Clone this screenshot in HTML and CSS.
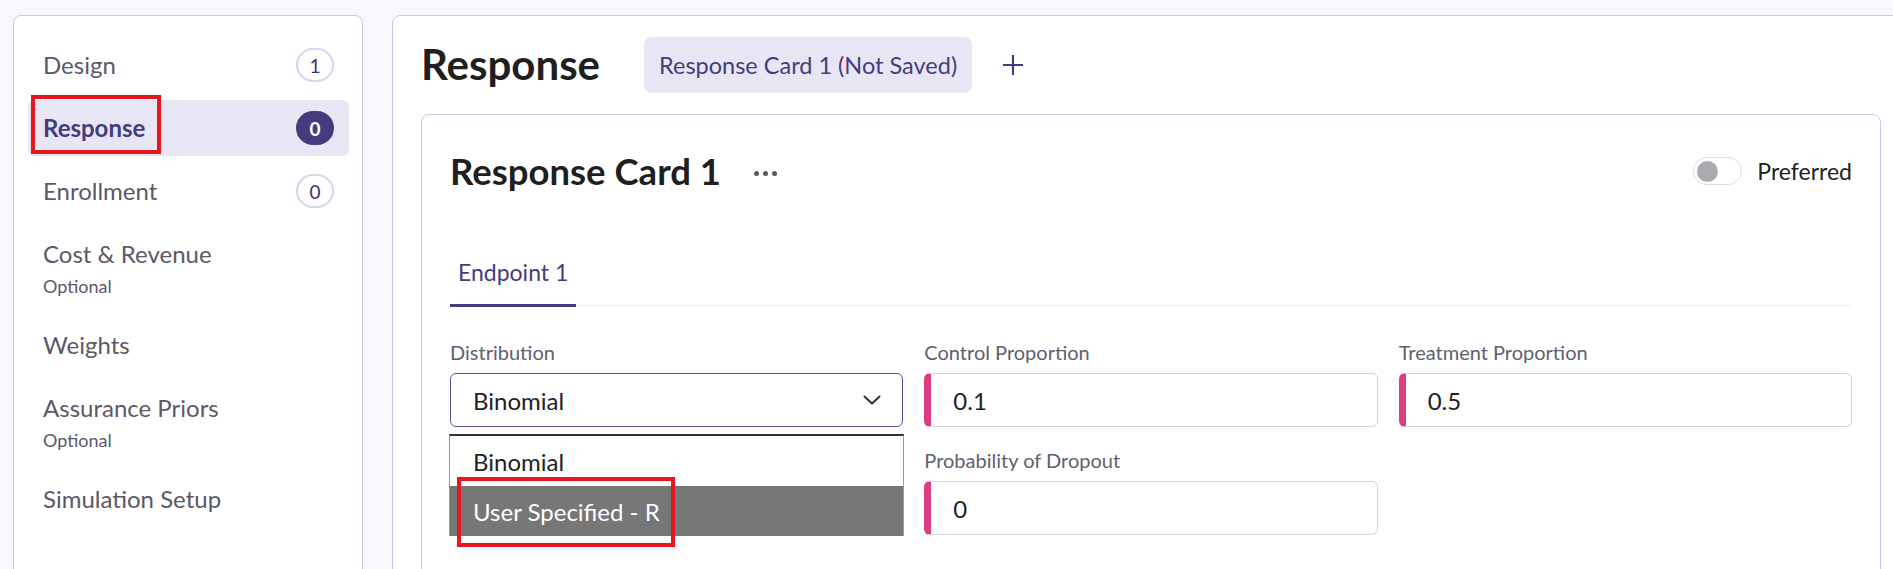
FILE: index.html
```html
<!DOCTYPE html>
<html lang="en">
<head>
<meta charset="utf-8">
<title>Response</title>
<link rel="stylesheet" href="styles.css">
</head>
<body>
<div class="page">
  <aside class="sidebar">
    <div class="nav-item">
      <span class="nav-title">Design</span>
      <span class="badge">1</span>
    </div>
    <div class="nav-item active">
      <span class="nav-title">Response</span>
      <span class="badge filled">0</span>
      <span class="annot annot-nav"></span>
    </div>
    <div class="nav-item">
      <span class="nav-title">Enrollment</span>
      <span class="badge">0</span>
    </div>
    <div class="nav-item">
      <span class="nav-text">
        <span class="nav-title">Cost &amp; Revenue</span>
        <span class="optional">Optional</span>
      </span>
    </div>
    <div class="nav-item">
      <span class="nav-title">Weights</span>
    </div>
    <div class="nav-item">
      <span class="nav-text">
        <span class="nav-title">Assurance Priors</span>
        <span class="optional">Optional</span>
      </span>
    </div>
    <div class="nav-item">
      <span class="nav-title">Simulation Setup</span>
    </div>
  </aside>

  <main class="main">
    <header class="main-head">
      <h1 class="page-title">Response</h1>
      <div class="chip">Response Card 1 (Not Saved)</div>
      <button class="add-btn" aria-label="Add">
        <svg width="22" height="22" viewBox="0 0 22 22"><path d="M11 1v20M1 11h20" stroke="#463c7d" stroke-width="2.2" fill="none"/></svg>
      </button>
    </header>

    <section class="card">
      <div class="card-head">
        <div class="card-title-wrap">
          <h2 class="card-title">Response Card 1</h2>
          <span class="dots"><i></i><i></i><i></i></span>
        </div>
        <div class="pref">
          <span class="toggle"><span class="knob"></span></span>
          <span class="pref-label">Preferred</span>
        </div>
      </div>

      <div class="tabs">
        <div class="tab active">Endpoint 1</div>
      </div>

      <div class="form-grid">
        <div class="field">
          <div class="label">Distribution</div>
          <div class="select-wrap">
            <div class="select">
              <span>Binomial</span>
              <svg width="18" height="10" viewBox="0 0 18 10"><path d="M1.5 1.5l7.5 7 7.5-7" stroke="#333" stroke-width="2" fill="none" stroke-linecap="round" stroke-linejoin="round"/></svg>
            </div>
            <div class="dropdown">
              <div class="option">Binomial</div>
              <div class="option selected">User Specified - R</div>
              <span class="annot annot-opt"></span>
            </div>
          </div>
        </div>
        <div class="field">
          <div class="label">Control Proportion</div>
          <div class="input">0.1</div>
        </div>
        <div class="field">
          <div class="label">Treatment Proportion</div>
          <div class="input">0.5</div>
        </div>
        <div class="field col2">
          <div class="label">Probability of Dropout</div>
          <div class="input">0</div>
        </div>
      </div>
    </section>
  </main>
</div>
</body>
</html>
```

FILE: styles.css
```css
* { box-sizing: border-box; }

html, body {
  margin: 0;
  height: 100%;
}

body {
  background: #f8f8fc;
  font-family: "Lato", "Noto Sans", sans-serif;
  color: #222;
  overflow: hidden;
}

.page {
  display: grid;
  grid-template-columns: 350px 1518px;
  column-gap: 29px;
  padding: 15px 0 0 13px;
  width: max-content;
  align-items: start;
}

/* Sidebar */
.sidebar {
  background: #fff;
  border: 1px solid #cbc6e6;
  border-radius: 8px;
  padding: 21px 13px 21px 14px;
  min-height: 700px;
  display: flex;
  flex-direction: column;
  gap: 7px;
}

.nav-item {
  position: relative;
  display: flex;
  align-items: center;
  justify-content: space-between;
  padding: 12px 15px;
  border-radius: 6px;
  color: #5c5868;
  font-size: 24px;
}

.nav-title {
  line-height: 32px;
  display: block;
}

.nav-text {
  display: flex;
  flex-direction: column;
}

.optional {
  font-size: 18px;
  line-height: 24px;
  margin-top: 4px;
}

.nav-item.active {
  background: #e8e6f4;
  color: #463c7d;
}

.nav-item.active .nav-title {
  font-weight: 700;
}

.badge {
  width: 38px;
  height: 34px;
  margin: -1px 0;
  border: 2px solid #d9d5ee;
  border-radius: 17px;
  display: flex;
  align-items: center;
  justify-content: center;
  font-size: 19px;
  color: #3d3470;
}

.badge.filled {
  background: #463c7d;
  border-color: #463c7d;
  color: #fff;
  font-weight: 700;
}

.annot {
  position: absolute;
  border: 4px solid #e8161f;
  pointer-events: none;
}

.annot-nav {
  left: 3px;
  top: -5px;
  width: 130px;
  height: 59px;
}

/* Main */
.main {
  background: #fff;
  border: 1px solid #cbc6e6;
  border-radius: 8px;
  padding: 21px 28px;
  min-height: 700px;
}

.main-head {
  display: flex;
  align-items: center;
  height: 56px;
}

.page-title {
  margin: -2px 44px 0 0;
  font-size: 42px;
  font-weight: 700;
  line-height: 56px;
  color: #1f1f1f;
}

.chip {
  height: 56px;
  padding: 0 15px;
  background: #e8e6f4;
  border-radius: 8px;
  display: flex;
  align-items: center;
  font-size: 23.5px;
  color: #463c7d;
}

.add-btn {
  margin-left: 30px;
  border: 0;
  background: none;
  padding: 0;
  width: 22px;
  height: 22px;
  display: flex;
}

.card {
  margin-top: 21px;
  border: 1px solid #cbc6e6;
  border-radius: 8px;
  padding: 34px 28px 0;
  min-height: 600px;
}

.card-head {
  display: flex;
  align-items: center;
  justify-content: space-between;
  height: 44px;
}

.card-title-wrap {
  display: flex;
  align-items: center;
  gap: 33px;
}

.card-title {
  margin: 0;
  font-size: 36.5px;
  font-weight: 700;
  line-height: 44px;
  color: #1f1f1f;
}

.dots {
  display: flex;
  gap: 4px;
  margin-top: 4px;
}

.dots i {
  width: 5px;
  height: 5px;
  border-radius: 50%;
  background: #5a5a5a;
}

.pref {
  display: flex;
  align-items: center;
  gap: 15px;
}

.toggle {
  width: 49px;
  height: 28px;
  border: 1px solid #dcdcdc;
  border-radius: 14px;
  display: flex;
  align-items: center;
  padding-left: 3px;
}

.knob {
  width: 21px;
  height: 21px;
  border-radius: 50%;
  background: #aba9b0;
}

.pref-label {
  font-size: 23px;
  color: #222;
}

/* Tabs */
.tabs {
  margin-top: 63px;
  border-bottom: 1px solid #ececf0;
  display: flex;
}

.tab {
  padding: 0 8px 16px;
  font-size: 23px;
  line-height: 32px;
  color: #463c7d;
  border-bottom: 3px solid #463c7d;
  margin-bottom: -2px;
}

/* Form */
.form-grid {
  margin-top: 32px;
  display: grid;
  grid-template-columns: repeat(3, 1fr);
  column-gap: 21px;
  row-gap: 19px;
}

.col2 { grid-column: 2; }

.label {
  font-size: 20px;
  line-height: 28px;
  color: #616070;
  margin-bottom: 7px;
}

.select-wrap {
  position: relative;
}

.select {
  height: 54px;
  border: 1px solid #5d5398;
  border-radius: 6px;
  padding: 0 21px 0 22px;
  display: flex;
  align-items: center;
  justify-content: space-between;
  font-size: 24px;
  color: #222;
}

.dropdown {
  position: absolute;
  left: -1px;
  right: -1px;
  top: 61px;
  background: #fff;
  border: 1px solid #9a9a9a;
  border-top: 2px solid #333;
  border-bottom: 0;
  z-index: 2;
}

.option {
  height: 50px;
  padding-left: 23px;
  display: flex;
  align-items: center;
  font-size: 24px;
  color: #222;
}

.option.selected {
  background: #777;
  color: #fff;
}

.annot-opt {
  left: 7px;
  top: 41px;
  width: 218px;
  height: 70px;
}

.input {
  height: 54px;
  border: 1px solid #d6d6da;
  border-left: 7px solid #dc3c82;
  border-radius: 6px;
  padding-left: 22px;
  display: flex;
  align-items: center;
  font-size: 24px;
  color: #222;
}
```
